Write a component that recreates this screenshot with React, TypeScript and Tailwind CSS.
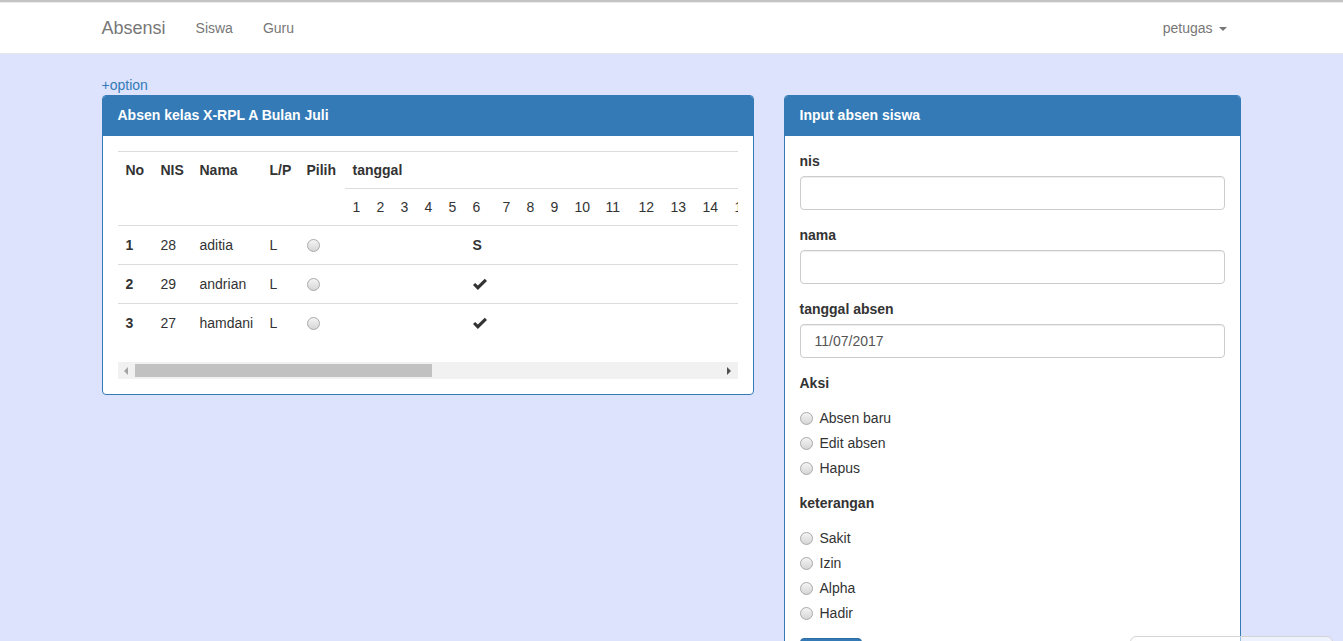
const font = "font-['Liberation_Sans','Helvetica_Neue',Arial,sans-serif]";

const dayWidths = [24, 24, 24, 24, 24, 30, 24, 24, 24, 31, 33, 32, 32, 32, 32];

const fixedCols = [
  { label: "No", w: "w-[35px]" },
  { label: "NIS", w: "w-[39px]" },
  { label: "Nama", w: "w-[70px]" },
  { label: "L/P", w: "w-[37px]" },
  { label: "Pilih", w: "w-[46px]" },
];

const rows = [
  { no: "1", nis: "28", nama: "aditia", lp: "L", mark: "S" },
  { no: "2", nis: "29", nama: "andrian", lp: "L", mark: "ok" },
  { no: "3", nis: "27", nama: "hamdani", lp: "L", mark: "ok" },
];

function Radio() {
  return (
    <span className="inline-block h-[13px] w-[13px] shrink-0 rounded-full border border-[#a9a9a9] bg-linear-to-b from-[#f4f4f4] to-[#d6d6d6]" />
  );
}

function Check() {
  return (
    <svg width="15" height="13" viewBox="0 0 15 13" className="block">
      <polygon points="0,7 2.3,4.8 5.2,7.6 12.6,0.4 15,2.7 5.2,12.3" fill="#333" />
    </svg>
  );
}

function Navbar() {
  return (
    <div>
      <div className="h-[2px] bg-[#c4c4c4]" />
      <div className="h-[1px] bg-[#ebebeb]" />
      <nav className="h-[51px] border-b border-[#e7e7e7] bg-white">
        <div className="mx-auto flex h-[50px] max-w-[1170px] items-center px-[15px]">
          <span className="pr-[15px] text-[18px] leading-5 text-[#777]">Absensi</span>
          <a className="px-[15px] text-[14px] leading-5 text-[#777]">Siswa</a>
          <a className="px-[15px] text-[14px] leading-5 text-[#777]">Guru</a>
          <div className="ml-auto flex items-center pr-[15px] text-[14px] leading-5 text-[#777]">
            petugas
            <span className="ml-[6px] mt-[1px] h-0 w-0 border-x-[4px] border-t-[4px] border-x-transparent border-t-[#777]" />
          </div>
        </div>
      </nav>
    </div>
  );
}

function AbsenTable() {
  return (
    <div className="w-[620px] overflow-hidden">
      <div className="w-max">
        <div className="flex border-t border-[#ddd] font-bold">
          {fixedCols.map((c) => (
            <div key={c.label} className={`${c.w} h-[73px] px-2 pt-2 leading-5`}>
              {c.label}
            </div>
          ))}
          <div className="flex flex-col">
            <div className="flex h-[37px] items-center border-b border-[#ddd] px-2">tanggal</div>
            <div className="flex h-[36px] items-center font-normal">
              {dayWidths.map((w, i) => (
                <div key={i} className="px-2" style={{ width: w }}>
                  {i + 1}
                </div>
              ))}
            </div>
          </div>
        </div>
        {rows.map((r) => (
          <div key={r.no} className="flex h-[39px] items-center border-t border-[#ddd]">
            <div className="w-[35px] px-2 font-bold">{r.no}</div>
            <div className="w-[39px] px-2">{r.nis}</div>
            <div className="w-[70px] px-2">{r.nama}</div>
            <div className="w-[37px] px-2">{r.lp}</div>
            <div className="flex w-[46px] px-2">
              <Radio />
            </div>
            {dayWidths.map((w, i) => (
              <div key={i} className="flex px-2" style={{ width: w }}>
                {i === 5 ? r.mark === "S" ? <span className="font-bold">S</span> : <Check /> : null}
              </div>
            ))}
          </div>
        ))}
      </div>
      <div className="mt-5 flex h-[17px] items-center bg-[#f1f1f1]">
        <div className="flex w-[17px] justify-center">
          <span className="h-0 w-0 border-y-[4px] border-r-[4px] border-y-transparent border-r-[#a3a3a3]" />
        </div>
        <div className="h-[13px] w-[297px] bg-[#c1c1c1]" />
        <div className="ml-auto flex w-[17px] justify-center">
          <span className="h-0 w-0 border-y-[4px] border-l-[4px] border-y-transparent border-l-[#505050]" />
        </div>
      </div>
    </div>
  );
}

function Field({ label, value }: { label: string; value?: string }) {
  return (
    <div className="mb-[15px]">
      <label className="mb-[5px] block font-bold leading-5">{label}</label>
      <div className="flex h-[34px] items-center rounded-[4px] border border-[#ccc] bg-white pl-[14px] text-[#555] shadow-[inset_0_1px_1px_rgba(0,0,0,0.075)]">
        {value}
      </div>
    </div>
  );
}

function RadioGroup({ label, options }: { label: string; options: string[] }) {
  return (
    <div className="mb-[15px]">
      <label className="mb-[5px] block font-bold leading-5">{label}</label>
      <div className="flex flex-col gap-[5px] pt-[10px]">
        {options.map((o) => (
          <div key={o} className="flex h-5 items-center gap-[7px]">
            <Radio />
            <span>{o}</span>
          </div>
        ))}
      </div>
    </div>
  );
}

export default function App() {
  return (
    <div className={`relative min-h-screen overflow-hidden bg-[#dde3fd] text-[14px] text-[#333] ${font}`}>
      <Navbar />
      <main className="mx-auto max-w-[1170px] px-[15px] pt-[21px]">
        <a className="block leading-5 text-[#337ab7]">+option</a>
        <div className="flex items-start gap-[30px]">
          <section className="w-[652px] overflow-hidden rounded-[4px] border border-[#337ab7] bg-white">
            <div className="flex h-[40px] items-center border-b border-[#337ab7] bg-[#337ab7] px-[15px] font-bold text-white">
              Absen kelas X-RPL A Bulan Juli
            </div>
            <div className="p-[15px]">
              <AbsenTable />
            </div>
          </section>
          <section className="w-[457px] overflow-hidden rounded-[4px] border border-[#337ab7] bg-white">
            <div className="flex h-[40px] items-center border-b border-[#337ab7] bg-[#337ab7] px-[15px] font-bold text-white">
              Input absen siswa
            </div>
            <div className="p-[15px]">
              <Field label="nis" />
              <Field label="nama" />
              <Field label="tanggal absen" value="11/07/2017" />
              <RadioGroup label="Aksi" options={["Absen baru", "Edit absen", "Hapus"]} />
              <RadioGroup label="keterangan" options={["Sakit", "Izin", "Alpha", "Hadir"]} />
              <button className="h-[34px] w-[62px] rounded-[4px] border border-[#2e6da4] bg-[#337ab7] text-white">
                Simpan
              </button>
            </div>
          </section>
        </div>
      </main>
      <div className="absolute left-[1130px] top-[636px] h-[40px] w-[203px] rounded-[6px] border border-[#d4d4d4] bg-white/50" />
    </div>
  );
}
